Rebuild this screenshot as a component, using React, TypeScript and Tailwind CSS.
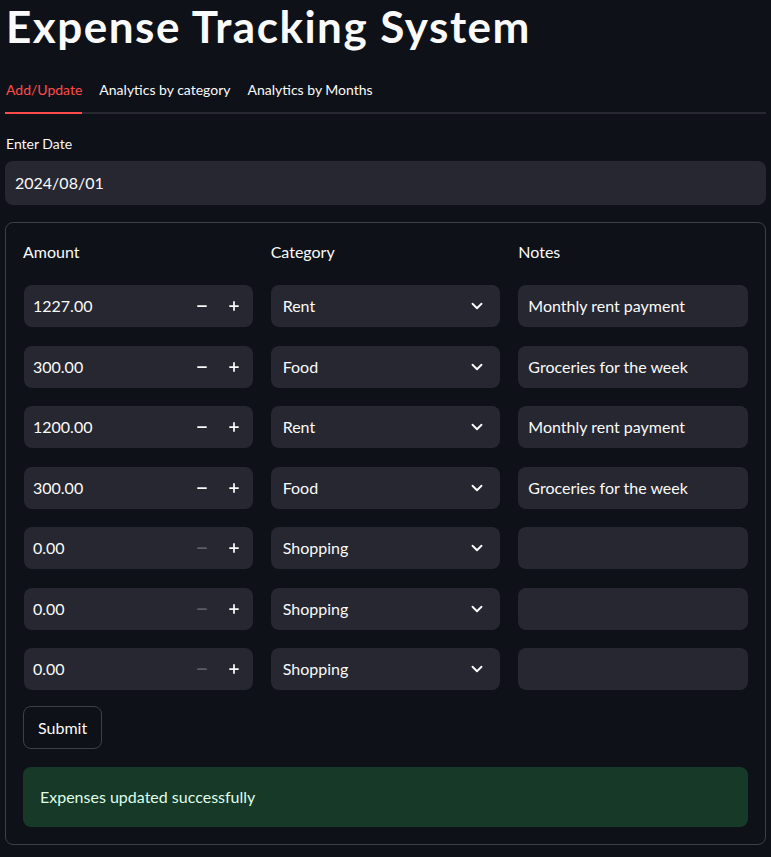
import { ChevronDown, Minus, Plus } from "lucide-react";

type Row = { amount: string; category: string; notes: string };

const rows: Row[] = [
  { amount: "1227.00", category: "Rent", notes: "Monthly rent payment" },
  { amount: "300.00", category: "Food", notes: "Groceries for the week" },
  { amount: "1200.00", category: "Rent", notes: "Monthly rent payment" },
  { amount: "300.00", category: "Food", notes: "Groceries for the week" },
  { amount: "0.00", category: "Shopping", notes: "" },
  { amount: "0.00", category: "Shopping", notes: "" },
  { amount: "0.00", category: "Shopping", notes: "" },
];

function AmountInput({ value }: { value: string }) {
  const zero = value === "0.00";
  return (
    <div className="ml-[1px] flex h-[42px] items-center rounded-lg bg-[#262730] pl-[9px] pr-[2px]">
      <span className="flex-1 text-[16px] text-[#fafafa]">{value}</span>
      <span className="flex h-8 w-8 items-center justify-center">
        <Minus size={14} strokeWidth={3} className={zero ? "text-[#5c5e66]" : "text-[#fafafa]"} />
      </span>
      <span className="flex h-8 w-[33px] items-center justify-center">
        <Plus size={14} strokeWidth={3} className="text-[#fafafa]" />
      </span>
    </div>
  );
}

export default function App() {
  return (
    <main
      className="min-h-screen bg-[#0e1117] px-[5px] text-[#fafafa]"
      style={{ fontFamily: "Lato, 'Noto Sans', sans-serif" }}
    >
      <h1 className="pl-[1px] text-[44px] font-bold leading-[52px] tracking-[1.5px]">Expense Tracking System</h1>

      <div className="mt-[27px] flex gap-[17px] border-b-2 border-[#262730] text-[14px]">
        <div className="-mb-[2px] border-b-2 border-[#ff4b4b] pb-[12px] pl-[1px] text-[#ff4b4b]">Add/Update</div>
        <div className="pb-[12px]">Analytics by category</div>
        <div className="pb-[12px]">Analytics by Months</div>
      </div>

      <div className="mt-[19px] pl-[1px] text-[14px]">Enter Date</div>
      <div className="mt-[7px] flex h-[44px] items-center rounded-lg bg-[#262730] px-[10px] text-[16px]">
        2024/08/01
      </div>

      <div className="mt-[17px] rounded-lg border border-[#3d4046] px-[17px] pb-[17px] pt-[17px]">
        <div className="grid grid-cols-3 gap-x-[18px]">
          <div className="text-[16px]">Amount</div>
          <div className="text-[16px]">Category</div>
          <div className="text-[16px]">Notes</div>
        </div>
        <div className="mt-[21px] flex flex-col gap-[18.5px]">
          {rows.map((r, i) => (
            <div key={i} className="grid grid-cols-3 gap-x-[18px]">
              <AmountInput value={r.amount} />
              <div className="flex h-[42px] items-center justify-between rounded-lg bg-[#262730] pl-[12px] pr-[14px] text-[16px]">
                <span>{r.category}</span>
                <ChevronDown size={18} strokeWidth={2.5} />
              </div>
              <div className="flex h-[42px] items-center rounded-lg bg-[#262730] px-[10px] text-[16px]">
                {r.notes}
              </div>
            </div>
          ))}
        </div>
        <button className="mt-[16px] flex h-[43px] items-center rounded-lg border border-[#3d4046] bg-[#0e1117] px-[14px] text-[16px] text-[#fafafa]">
          Submit
        </button>
        <div className="mt-[18px] flex h-[60px] items-center rounded-lg bg-[#173928] px-[17px] text-[16px] text-[#dffde9]">
          Expenses updated successfully
        </div>
      </div>
    </main>
  );
}
